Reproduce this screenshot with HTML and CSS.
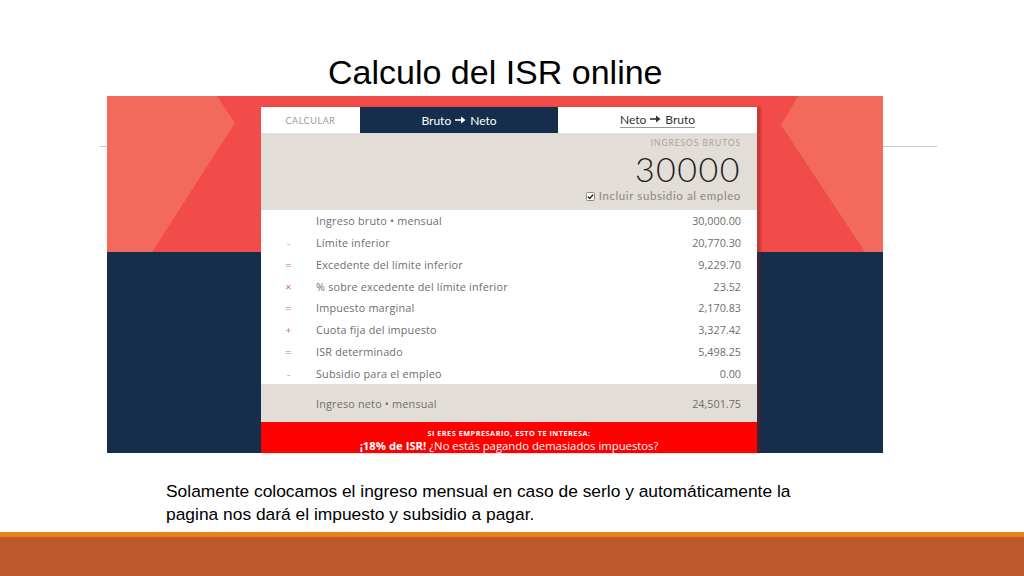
FILE: index.html
```html
<!DOCTYPE html>
<html lang="es">
<head>
<meta charset="utf-8">
<title>Calculo del ISR online</title>
<link rel="stylesheet" href="styles.css">
</head>
<body>
<div class="slide">
  <h1 class="title">Calculo del ISR online</h1>
  <div class="figure">
    <div class="rule"></div>
    <svg class="bg" width="776" height="357" viewBox="0 0 776 357" preserveAspectRatio="none">
      <rect x="0" y="0" width="776" height="156" fill="#f14b4a"/>
      <polygon points="0,0 110,0 128,27 45,156 0,156" fill="#f36a5c"/>
      <polygon points="691,0 776,0 776,156 758,156 674,29" fill="#f36a5c"/>
      <rect x="0" y="156" width="776" height="201" fill="#152e4c"/>
    </svg>
    <div class="card">
      <div class="tabs">
        <div class="tab tab-label">CALCULAR</div>
        <div class="tab tab-active">Bruto <svg class="arrow" width="11" height="8" viewBox="0 0 11 8"><path d="M0 4h7" stroke="#fff" stroke-width="1.6"/><path d="M6 0.5l4.5 3.5-4.5 3.5z" fill="#fff"/></svg> Neto</div>
        <div class="tab tab-other"><span class="tab-link">Neto <svg class="arrow" width="11" height="8" viewBox="0 0 11 8"><path d="M0 4h7" stroke="#333" stroke-width="1.6"/><path d="M6 0.5l4.5 3.5-4.5 3.5z" fill="#333"/></svg> Bruto</span></div>
      </div>
      <div class="input">
        <div class="input-label">INGRESOS BRUTOS</div>
        <div class="input-value">30000</div>
        <div class="input-check"><svg class="check" width="9" height="9" viewBox="0 0 9 9"><rect x="0.5" y="0.5" width="8" height="8" rx="1" fill="#fff" stroke="#888"/><path d="M2 4.6l1.8 1.8 3.4-4" fill="none" stroke="#333" stroke-width="1.5"/></svg> Incluir subsidio al empleo</div>
      </div>
      <div class="rows">
        <div class="row"><span class="sign"></span><span class="label">Ingreso bruto • mensual</span><span class="value">30,000.00</span></div>
        <div class="row"><span class="sign sign-minus">-</span><span class="label">Límite inferior</span><span class="value">20,770.30</span></div>
        <div class="row"><span class="sign">=</span><span class="label">Excedente del límite inferior</span><span class="value">9,229.70</span></div>
        <div class="row"><span class="sign">×</span><span class="label">% sobre excedente del límite inferior</span><span class="value">23.52</span></div>
        <div class="row"><span class="sign">=</span><span class="label">Impuesto marginal</span><span class="value">2,170.83</span></div>
        <div class="row"><span class="sign">+</span><span class="label">Cuota fija del impuesto</span><span class="value">3,327.42</span></div>
        <div class="row"><span class="sign">=</span><span class="label">ISR determinado</span><span class="value">5,498.25</span></div>
        <div class="row"><span class="sign sign-minus">-</span><span class="label">Subsidio para el empleo</span><span class="value">0.00</span></div>
      </div>
      <div class="total"><span class="sign"></span><span class="label">Ingreso neto • mensual</span><span class="value">24,501.75</span></div>
      <div class="promo">
        <div class="promo-top">SI ERES EMPRESARIO, ESTO TE INTERESA:</div>
        <div class="promo-main"><b>¡18% de ISR!</b> ¿No estás pagando demasiados impuestos?</div>
      </div>
    </div>
  </div>
  <p class="caption">Solamente colocamos el ingreso mensual en caso de serlo y automáticamente la<br>pagina nos dará el impuesto y subsidio a pagar.</p>
  <div class="footer"></div>
</div>
</body>
</html>
```
FILE: styles.css
```css
* { box-sizing: border-box; }
html, body { margin: 0; padding: 0; background: #fff; }
.slide {
  width: 1024px;
  height: 576px;
  display: flex;
  flex-direction: column;
  overflow: hidden;
  font-family: "Liberation Sans", Arial, sans-serif;
}
.title {
  margin: 0;
  padding: 53px 0 0 328px;
  height: 91px;
  font-size: 34px;
  line-height: 38px;
  font-weight: normal;
  color: #000;
}
.figure {
  position: relative;
  margin: 5px 0 0 107px;
  width: 776px;
  height: 357px;
}
.rule {
  position: absolute;
  left: -7px;
  top: 50px;
  width: 837px;
  height: 1px;
  background: #c8c8c8;
}
.bg {
  position: absolute;
  left: 0;
  top: 0;
  display: block;
}
.card {
  position: relative;
  margin: 11px 0 0 154px;
  width: 496px;
  height: 346px;
  overflow: hidden;
  box-shadow: 4px 0 2px rgba(130, 20, 20, 0.35);
}
.tabs {
  display: flex;
  height: 26px;
  background: #fff;
  font-family: Lato, "Open Sans", sans-serif;
}
.tab {
  display: flex;
  align-items: center;
  justify-content: center;
}
.tab-label {
  width: 99px;
  font-size: 9px;
  letter-spacing: 0.6px;
  color: #9a9a9a;
}
.tab-active {
  width: 198px;
  background: #152e4c;
  color: #fff;
  font-size: 12px;
  gap: 4px;
}
.tab-other {
  flex: 1;
  color: #333;
  font-size: 12px;
}
.tab-link {
  display: flex;
  align-items: center;
  gap: 4px;
  border-bottom: 1px solid #999;
  line-height: 13px;
  padding-bottom: 1px;
}
.arrow { display: block; }
.input {
  height: 77px;
  background: #e2ddd7;
  display: flex;
  flex-direction: column;
  align-items: flex-end;
  padding: 5px 16px 0 0;
  font-family: Lato, "Open Sans", sans-serif;
}
.input-label {
  font-size: 8.5px;
  line-height: 10px;
  letter-spacing: 0.9px;
  color: #a8a4a0;
}
.input-value {
  font-size: 34px;
  font-weight: 300;
  line-height: 36px;
  margin-top: 3px;
  letter-spacing: 1.5px;
  color: #1e1e1e;
}
.input-check {
  display: flex;
  align-items: center;
  gap: 4px;
  margin-top: 2px;
  font-size: 11.5px;
  line-height: 14px;
  letter-spacing: 0.6px;
  color: #8a8682;
}
.check { display: block; }
.rows {
  background: #fff;
  height: 174px;
  display: grid;
  grid-template-rows: repeat(8, 1fr);
}
.row, .total {
  display: grid;
  grid-template-columns: 55px 1fr auto;
  align-items: center;
  padding-right: 16px;
  font-family: "Open Sans", "Noto Sans", sans-serif;
  font-size: 10.8px;
  color: #6e6e6e;
}
.sign {
  text-align: center;
  color: #e0608a;
  font-size: 11px;
}
.sign-minus { color: #d8a2b2; }
.label { letter-spacing: 0.2px; }
.value { text-align: right; }
.total {
  height: 38px;
  background: #e2ddd7;
}
.promo {
  height: 40px;
  background: #fe0000;
  color: #fff;
  text-align: center;
  font-family: "Open Sans", "Noto Sans", sans-serif;
  padding-top: 7px;
}
.promo-top {
  font-size: 7.3px;
  font-weight: bold;
  line-height: 9px;
  letter-spacing: 0.5px;
}
.promo-main {
  font-size: 11.3px;
  line-height: 16px;
}
.caption {
  margin: 27px 0 0 166px;
  font-size: 17.4px;
  line-height: 23px;
  color: #000;
}
.footer {
  margin-top: auto;
  height: 44px;
  border-top: 5px solid #e8831b;
  background: #bf582c;
}
```
